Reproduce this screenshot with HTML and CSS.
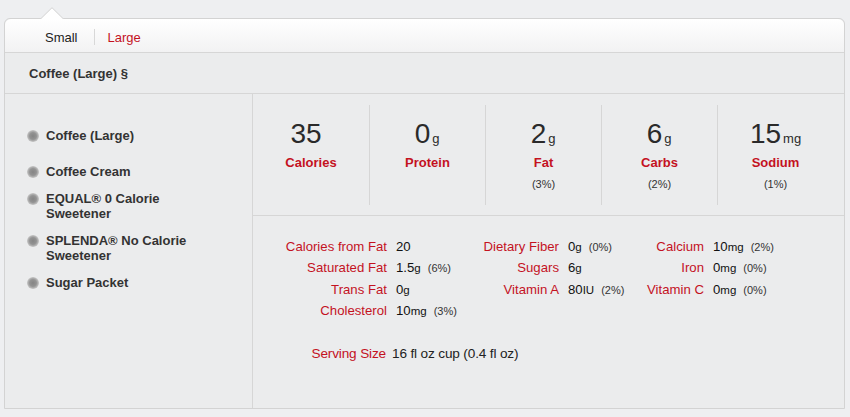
FILE: index.html
```html
<!DOCTYPE html>
<html>
<head>
<meta charset="utf-8">
<link rel="stylesheet" href="styles.css">
</head>
<body>
<div class="card">
  <svg class="notch" width="24" height="12" viewBox="0 0 24 12"><polygon points="0,12.5 12,0.7 24,12.5" fill="#ffffff"/><polyline points="0.5,12 12,0.7 23.5,12" fill="none" stroke="#d2d2d2" stroke-width="1"/></svg>
  <div class="tabs">
    <span class="tab">Small</span>
    <span class="sep"></span>
    <span class="tab active">Large</span>
  </div>
  <div class="title">Coffee (Large) §</div>
  <div class="main">
    <ul class="items">
      <li class="item first"><span class="dot"></span><span>Coffee (Large)</span></li>
      <li class="item"><span class="dot"></span><span>Coffee Cream</span></li>
      <li class="item"><span class="dot"></span><span>EQUAL® 0 Calorie<br>Sweetener</span></li>
      <li class="item"><span class="dot"></span><span>SPLENDA® No Calorie<br>Sweetener</span></li>
      <li class="item"><span class="dot"></span><span>Sugar Packet</span></li>
    </ul>
    <div class="facts">
      <div class="summary">
        <div class="col"><div class="num">35<span class="u"></span></div><div class="lbl">Calories</div></div>
        <div class="col"><div class="num">0<span class="u">g</span></div><div class="lbl">Protein</div></div>
        <div class="col"><div class="num">2<span class="u">g</span></div><div class="lbl">Fat</div><div class="pct">(3%)</div></div>
        <div class="col"><div class="num">6<span class="u">g</span></div><div class="lbl">Carbs</div><div class="pct">(2%)</div></div>
        <div class="col"><div class="num">15<span class="u">mg</span></div><div class="lbl">Sodium</div><div class="pct">(1%)</div></div>
      </div>
      <div class="details">
        <div class="grid">
          <div class="k">Calories from Fat</div><div class="v">20</div>
          <div class="k">Dietary Fiber</div><div class="v">0<span class="u">g</span><span class="p">(0%)</span></div>
          <div class="k">Calcium</div><div class="v">10<span class="u">mg</span><span class="p">(2%)</span></div>

          <div class="k">Saturated Fat</div><div class="v">1.5<span class="u">g</span><span class="p">(6%)</span></div>
          <div class="k">Sugars</div><div class="v">6<span class="u">g</span></div>
          <div class="k">Iron</div><div class="v">0<span class="u">mg</span><span class="p">(0%)</span></div>

          <div class="k">Trans Fat</div><div class="v">0<span class="u">g</span></div>
          <div class="k">Vitamin A</div><div class="v">80<span class="u">IU</span><span class="p">(2%)</span></div>
          <div class="k">Vitamin C</div><div class="v">0<span class="u">mg</span><span class="p">(0%)</span></div>

          <div class="k">Cholesterol</div><div class="v">10<span class="u">mg</span><span class="p">(3%)</span></div>
          <div class="k"></div><div class="v"></div>
          <div class="k"></div><div class="v"></div>
        </div>
        <div class="serving"><span class="sk">Serving Size</span><span class="sv">16 fl oz cup (0.4 fl oz)</span></div>
      </div>
    </div>
  </div>
</div>
</body>
</html>
```
FILE: styles.css
```css
html, body {
  margin: 0;
  padding: 0;
  background: #eeeff1;
  font-family: "Liberation Sans", Arial, Helvetica, sans-serif;
  color: #333;
}
.card {
  position: relative;
  margin: 18px 5px 0 4px;
  border: 1px solid #d3d3d3;
  border-radius: 6px 6px 0 0;
  background: #ebeced;
}
.notch {
  position: absolute;
  left: 35px;
  top: -12px;
  display: block;
}
.tabs {
  height: 34px;
  box-sizing: border-box;
  padding-top: 3px;
  display: flex;
  align-items: center;
  padding-left: 40px;
  background: linear-gradient(#ffffff, #f2f2f3);
  border-bottom: 1px solid #d6d6d6;
  border-radius: 6px 6px 0 0;
  font-size: 13px;
}
.tab { color: #222; }
.tab.active { color: #c4121f; }
.sep {
  width: 1px;
  height: 16px;
  background: #d8d8d8;
  margin: 0 13px 0 16px;
}
.title {
  height: 40px;
  line-height: 42px;
  padding-left: 24px;
  font-size: 13px;
  font-weight: bold;
  color: #333;
  border-bottom: 1px solid #d6d6d6;
}
.main {
  display: grid;
  grid-template-columns: 248px 1fr;
  min-height: 314px;
}
.items {
  list-style: none;
  margin: 0;
  padding: 34px 0 0 22px;
  border-right: 1px solid #d6d6d6;
}
.item {
  display: flex;
  align-items: flex-start;
  font-size: 13px;
  line-height: 15px;
  font-weight: bold;
  color: #333;
  margin-bottom: 12px;
}
.item.first { margin-bottom: 21px; }
.dot {
  flex: none;
  width: 12px;
  height: 12px;
  border-radius: 50%;
  margin: 2px 7px 0 0;
  background: radial-gradient(circle at 50% 50%, #858585 0, #939393 40%, #c9c9c9 72%, #e6e6e6 100%);
}
.summary {
  display: grid;
  grid-template-columns: repeat(5, 116px);
  padding: 11px 0 10px 0;
  border-bottom: 1px solid #d6d6d6;
}
.col {
  height: 100px;
  text-align: center;
  padding-top: 13px;
  box-sizing: border-box;
}
.col + .col { border-left: 1px solid #d6d6d6; }
.num {
  height: 32px;
  font-size: 28px;
  line-height: 32px;
  color: #2a2a2a;
}
.num .u {
  display: inline-block;
  font-size: 13px;
  line-height: 13px;
  margin-left: 2px;
  min-width: 8px;
  text-align: left;
}
.lbl {
  margin-top: 5px;
  font-size: 13px;
  line-height: 16px;
  font-weight: bold;
  color: #c4121f;
}
.pct {
  margin-top: 6px;
  font-size: 11px;
  line-height: 14px;
  color: #333;
}
.details {
  padding-top: 20px;
}
.grid {
  display: grid;
  grid-template-columns: 134px 72px 100px 54px 91px auto;
  grid-auto-rows: 21.33px;
  align-items: center;
  font-size: 13.2px;
}
.k {
  text-align: right;
  color: #c4121f;
  white-space: nowrap;
}
.v {
  padding-left: 9px;
  color: #111;
  white-space: nowrap;
}
.v .u { font-size: 11.5px; }
.v .p {
  font-size: 11px;
  color: #333;
  margin-left: 7px;
}
.serving {
  margin-top: 22px;
  display: flex;
  line-height: 21px;
  font-size: 13.6px;
  letter-spacing: -0.15px;
}
.sk {
  width: 133px;
  text-align: right;
  color: #c4121f;
}
.sv {
  padding-left: 6px;
  color: #222;
}
```
